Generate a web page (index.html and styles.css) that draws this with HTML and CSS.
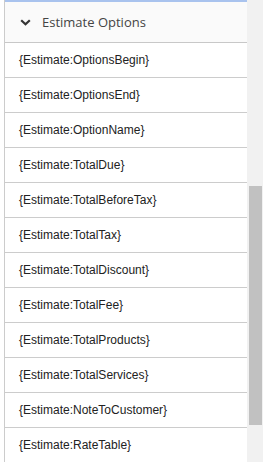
FILE: index.html
```html
<!DOCTYPE html>
<html>
<head>
<meta charset="utf-8">
<link rel="stylesheet" href="styles.css">
</head>
<body>
<div class="frame">
  <div class="panel">
    <div class="topline"></div>
    <div class="header">
      <svg class="chev" width="11" height="7" viewBox="0 0 11 7"><path d="M1.2 1.2 L5.5 5.3 L9.8 1.2" fill="none" stroke="#333" stroke-width="2.2"/></svg>
      <span class="title">Estimate Options</span>
    </div>
    <ul class="list">
      <li class="row">{Estimate:OptionsBegin}</li>
      <li class="row">{Estimate:OptionsEnd}</li>
      <li class="row">{Estimate:OptionName}</li>
      <li class="row">{Estimate:TotalDue}</li>
      <li class="row">{Estimate:TotalBeforeTax}</li>
      <li class="row">{Estimate:TotalTax}</li>
      <li class="row">{Estimate:TotalDiscount}</li>
      <li class="row">{Estimate:TotalFee}</li>
      <li class="row">{Estimate:TotalProducts}</li>
      <li class="row">{Estimate:TotalServices}</li>
      <li class="row">{Estimate:NoteToCustomer}</li>
      <li class="row">{Estimate:RateTable}</li>
    </ul>
  </div>
  <div class="scrollbar"><div class="thumb"></div></div>
</div>
</body>
</html>
```
FILE: styles.css
```css
html, body {
  margin: 0;
  padding: 0;
  background: #ffffff;
  overflow: hidden;
}
.frame {
  display: flex;
  height: 462px;
  width: 263px;
  padding-left: 4px;
  box-sizing: border-box;
  overflow: hidden;
}
.panel {
  width: 242px;
  border-left: 1px solid #cccccc;
  display: flex;
  flex-direction: column;
  flex: none;
}
.topline {
  height: 2px;
  background: #a9c3ee;
  flex: none;
}
.header {
  height: 40px;
  background: #fafafa;
  border-bottom: 1px solid #c8c8c8;
  display: flex;
  align-items: center;
  padding-left: 15px;
  flex: none;
}
.chev {
  display: block;
  margin-right: 11px;
}
.title {
  font-family: "Open Sans", sans-serif;
  font-size: 13px;
  color: #444444;
}
.list {
  list-style: none;
  margin: 0;
  padding: 0;
}
.row {
  height: 34px;
  border-bottom: 1px solid #cccccc;
  display: flex;
  align-items: center;
  padding-left: 14px;
  font-family: "Liberation Sans", Arial, sans-serif;
  font-size: 12px;
  color: #222222;
}
.scrollbar {
  width: 17px;
  background: #f1f1f1;
  flex: none;
}
.thumb {
  margin-top: 186px;
  margin-left: 2px;
  width: 13px;
  height: 239px;
  background: #c1c1c1;
}
```
